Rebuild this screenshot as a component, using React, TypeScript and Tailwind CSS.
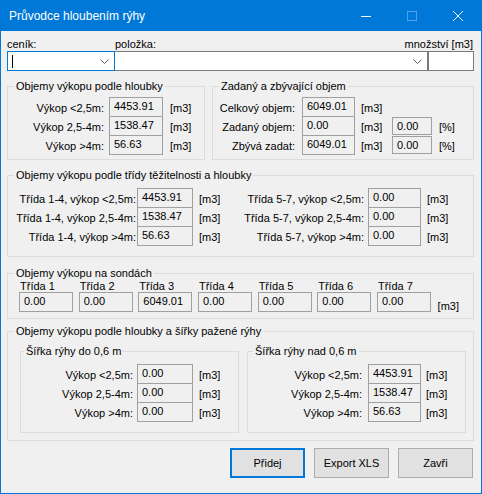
import React from "react";

const Box = ({ value, w = "w-[54px]", cls = "" }: { value?: string; w?: string; cls?: string }) => (
    <div className={`${w} h-[20px] shrink-0 border border-[#a0a0a0] bg-[#f0f0f0] pl-[4px] leading-[16px] ${cls}`}>
        {value}
    </div>
);

const Chevron = () => (
    <svg width="9" height="5" viewBox="0 0 9 5" className="shrink-0">
        <polyline points="0.5,0.5 4.5,4.5 8.5,0.5" fill="none" stroke="#606060" strokeWidth="1" />
    </svg>
);

const Group = ({ title, cls, legendCls = "ml-[6px] px-[2px]", children }: { title: string; cls: string; legendCls?: string; children: React.ReactNode }) => (
    <fieldset className={`border border-[#dcdcdc] min-w-0 shrink-0 ${cls}`}>
        <legend className={`leading-[15px] ${legendCls}`}>{title}</legend>
        {children}
    </fieldset>
);

interface RowProps {
    label: string;
    value: string;
    lw: string;
    bml: string;
    bw: string;
    uml: string;
}

const Row = ({ label, value, lw, bml, bw, uml }: RowProps) => (
    <div className="flex items-start h-[19px]">
        <div className={`${lw} text-right leading-[22px] whitespace-nowrap shrink-0`}>{label}</div>
        <Box value={value} w={bw} cls={bml} />
        <div className={`${uml} leading-[22px]`}>[m3]</div>
    </div>
);

export default function App() {
    const sondy = ["0.00", "0.00", "6049.01", "0.00", "0.00", "0.00", "0.00"];

    return (
        <div className="w-[482px] h-[494px] flex flex-col bg-[#0078d7] px-[1px] pb-[1px] text-[11px] text-black font-['Segoe_UI','Liberation_Sans',Arial,sans-serif]">
            {/* Title bar */}
            <div className="h-[31px] flex items-center text-white shrink-0">
                <span className="pl-[8px] text-[12px] pt-[1px]">Průvodce hloubením rýhy</span>
                <div className="ml-auto flex h-full">
                    <div className="w-[46px] flex items-center justify-center">
                        <svg width="10" height="10" viewBox="0 0 10 10">
                            <line x1="0" y1="5.5" x2="10" y2="5.5" stroke="#ffffff" strokeWidth="1" />
                        </svg>
                    </div>
                    <div className="w-[46px] flex items-center justify-center">
                        <svg width="10" height="10" viewBox="0 0 10 10">
                            <rect x="0.5" y="0.5" width="9" height="9" fill="none" stroke="#4ea2ea" strokeWidth="1" />
                        </svg>
                    </div>
                    <div className="w-[46px] flex items-center justify-center">
                        <svg width="10" height="10" viewBox="0 0 10 10">
                            <path d="M0 0 L10 10 M10 0 L0 10" stroke="#ffffff" strokeWidth="1" />
                        </svg>
                    </div>
                </div>
            </div>

            {/* Body */}
            <div className="flex-1 bg-[#f0f0f0] pl-[6px] pr-[7px] pt-[6px] flex flex-col">
                <div className="flex h-[14px] leading-[14px]">
                    <div className="w-[108px]">ceník:</div>
                    <div>položka:</div>
                    <div className="ml-auto pr-[1px]">množství [m3]</div>
                </div>
                <div className="flex h-[20px]">
                    <div className="w-[108px] border border-[#0078d7] bg-white flex items-center pl-[4px] pr-[5px]">
                        <div className="w-[1px] h-[13px] bg-black" />
                        <div className="ml-auto"><Chevron /></div>
                    </div>
                    <div className="w-[313px] border border-[#7a7a7a] border-l-0 bg-white flex items-center justify-end pr-[5px]">
                        <Chevron />
                    </div>
                    <div className="flex-1 border border-[#7a7a7a] border-l-[#7a7a7a] bg-white" />
                </div>

                {/* Groups 1 and 2 */}
                <div className="flex mt-[8px] gap-[7px]">
                    <Group title="Objemy výkopu podle hloubky" cls="w-[198px] h-[81px]">
                        <div className="pt-[3px]">
                            <Row label="Výkop <2,5m:" value="4453.91" lw="w-[96px]" bml="ml-[5px]" bw="w-[54px]" uml="ml-[7px]" />
                            <Row label="Výkop 2,5-4m:" value="1538.47" lw="w-[96px]" bml="ml-[5px]" bw="w-[54px]" uml="ml-[7px]" />
                            <Row label="Výkop >4m:" value="56.63" lw="w-[96px]" bml="ml-[5px]" bw="w-[54px]" uml="ml-[7px]" />
                        </div>
                    </Group>
                    <Group title="Zadaný a zbývající objem" cls="flex-1 h-[81px]">
                        <div className="pt-[3px]">
                            <div className="flex items-start h-[19px]">
                                <div className="w-[82px] text-right leading-[22px]">Celkový objem:</div>
                                <Box value="6049.01" w="w-[53px]" cls="ml-[7px]" />
                                <div className="ml-[6px] leading-[22px]">[m3]</div>
                            </div>
                            <div className="flex items-start h-[19px]">
                                <div className="w-[82px] text-right leading-[22px]">Zadaný objem:</div>
                                <Box value="0.00" w="w-[53px]" cls="ml-[7px]" />
                                <div className="ml-[6px] w-[24px] leading-[22px]">[m3]</div>
                                <Box value="0.00" w="w-[40px]" cls="ml-[7px] mt-[1px] !h-[18px]" />
                                <div className="ml-[7px] leading-[22px]">[%]</div>
                            </div>
                            <div className="flex items-start h-[19px]">
                                <div className="w-[82px] text-right leading-[22px]">Zbývá zadat:</div>
                                <Box value="6049.01" w="w-[53px]" cls="ml-[7px]" />
                                <div className="ml-[6px] w-[24px] leading-[22px]">[m3]</div>
                                <Box value="0.00" w="w-[40px]" cls="ml-[7px] mt-[1px] !h-[18px]" />
                                <div className="ml-[7px] leading-[22px]">[%]</div>
                            </div>
                        </div>
                    </Group>
                </div>

                {/* Group 3 */}
                <Group title="Objemy výkopu podle třídy těžitelnosti a hloubky" cls="mt-[8px] h-[89px]">
                    <div className="pt-[5px] flex">
                        <div className="w-[232px] shrink-0">
                            <Row label="Třída 1-4, výkop <2,5m:" value="4453.91" lw="w-[128px]" bml="ml-[1px]" bw="w-[56px]" uml="ml-[6px]" />
                            <Row label="Třída 1-4, výkop 2,5-4m:" value="1538.47" lw="w-[128px]" bml="ml-[1px]" bw="w-[56px]" uml="ml-[6px]" />
                            <Row label="Třída 1-4, výkop >4m:" value="56.63" lw="w-[128px]" bml="ml-[1px]" bw="w-[56px]" uml="ml-[6px]" />
                        </div>
                        <div>
                            <Row label="Třída 5-7, výkop <2,5m:" value="0.00" lw="w-[124px]" bml="ml-[4px]" bw="w-[53px]" uml="ml-[6px]" />
                            <Row label="Třída 5-7, výkop 2,5-4m:" value="0.00" lw="w-[124px]" bml="ml-[4px]" bw="w-[53px]" uml="ml-[6px]" />
                            <Row label="Třída 5-7, výkop >4m:" value="0.00" lw="w-[124px]" bml="ml-[4px]" bw="w-[53px]" uml="ml-[6px]" />
                        </div>
                    </div>
                </Group>

                {/* Group 4 */}
                <Group title="Objemy výkopu na sondách" cls="mt-[9px] h-[53px]">
                    <div className="flex items-end pl-[11px] gap-[5.67px]">
                        {sondy.map((v, i) => (
                            <div key={i} className="flex flex-col">
                                <div className="leading-[10px] pl-[1px]">Třída {i + 1}</div>
                                <Box value={v} cls="mt-[1px]" />
                            </div>
                        ))}
                        <div className="ml-[1px] leading-[14px] -mb-[1px]">[m3]</div>
                    </div>
                </Group>

                {/* Group 5 */}
                <Group title="Objemy výkopu podle hloubky a šířky pažené rýhy" cls="mt-[5px] h-[117px]">
                    <div className="flex pl-[12px] gap-[8px] mt-[5px]">
                        <Group title="Šířka rýhy do 0,6 m" cls="w-[219px] h-[89px]" legendCls="ml-[3px] px-[2px]">
                            <div className="pt-[5px]">
                                <Row label="Výkop <2,5m:" value="0.00" lw="w-[112px]" bml="ml-[4px]" bw="w-[56px]" uml="ml-[6px]" />
                                <Row label="Výkop 2,5-4m:" value="0.00" lw="w-[112px]" bml="ml-[4px]" bw="w-[56px]" uml="ml-[6px]" />
                                <Row label="Výkop >4m:" value="0.00" lw="w-[112px]" bml="ml-[4px]" bw="w-[56px]" uml="ml-[6px]" />
                            </div>
                        </Group>
                        <Group title="Šířka rýhy nad 0,6 m" cls="w-[219px] h-[89px]" legendCls="ml-[5px] px-[2px]">
                            <div className="pt-[5px]">
                                <Row label="Výkop <2,5m:" value="4453.91" lw="w-[114px]" bml="ml-[6px]" bw="w-[53px]" uml="ml-[5px]" />
                                <Row label="Výkop 2,5-4m:" value="1538.47" lw="w-[114px]" bml="ml-[6px]" bw="w-[53px]" uml="ml-[5px]" />
                                <Row label="Výkop >4m:" value="56.63" lw="w-[114px]" bml="ml-[6px]" bw="w-[53px]" uml="ml-[5px]" />
                            </div>
                        </Group>
                    </div>
                </Group>

                {/* Buttons */}
                <div className="flex justify-end mt-[7px] gap-[9px] pr-[1px]">
                    <button className="w-[75px] h-[30px] border-2 border-[#0078d7] bg-[#e1e1e1]">Přidej</button>
                    <button className="w-[75px] h-[30px] border border-[#adadad] bg-[#e1e1e1]">Export XLS</button>
                    <button className="w-[75px] h-[30px] border border-[#adadad] bg-[#e1e1e1]">Zavři</button>
                </div>
            </div>
        </div>
    );
}
